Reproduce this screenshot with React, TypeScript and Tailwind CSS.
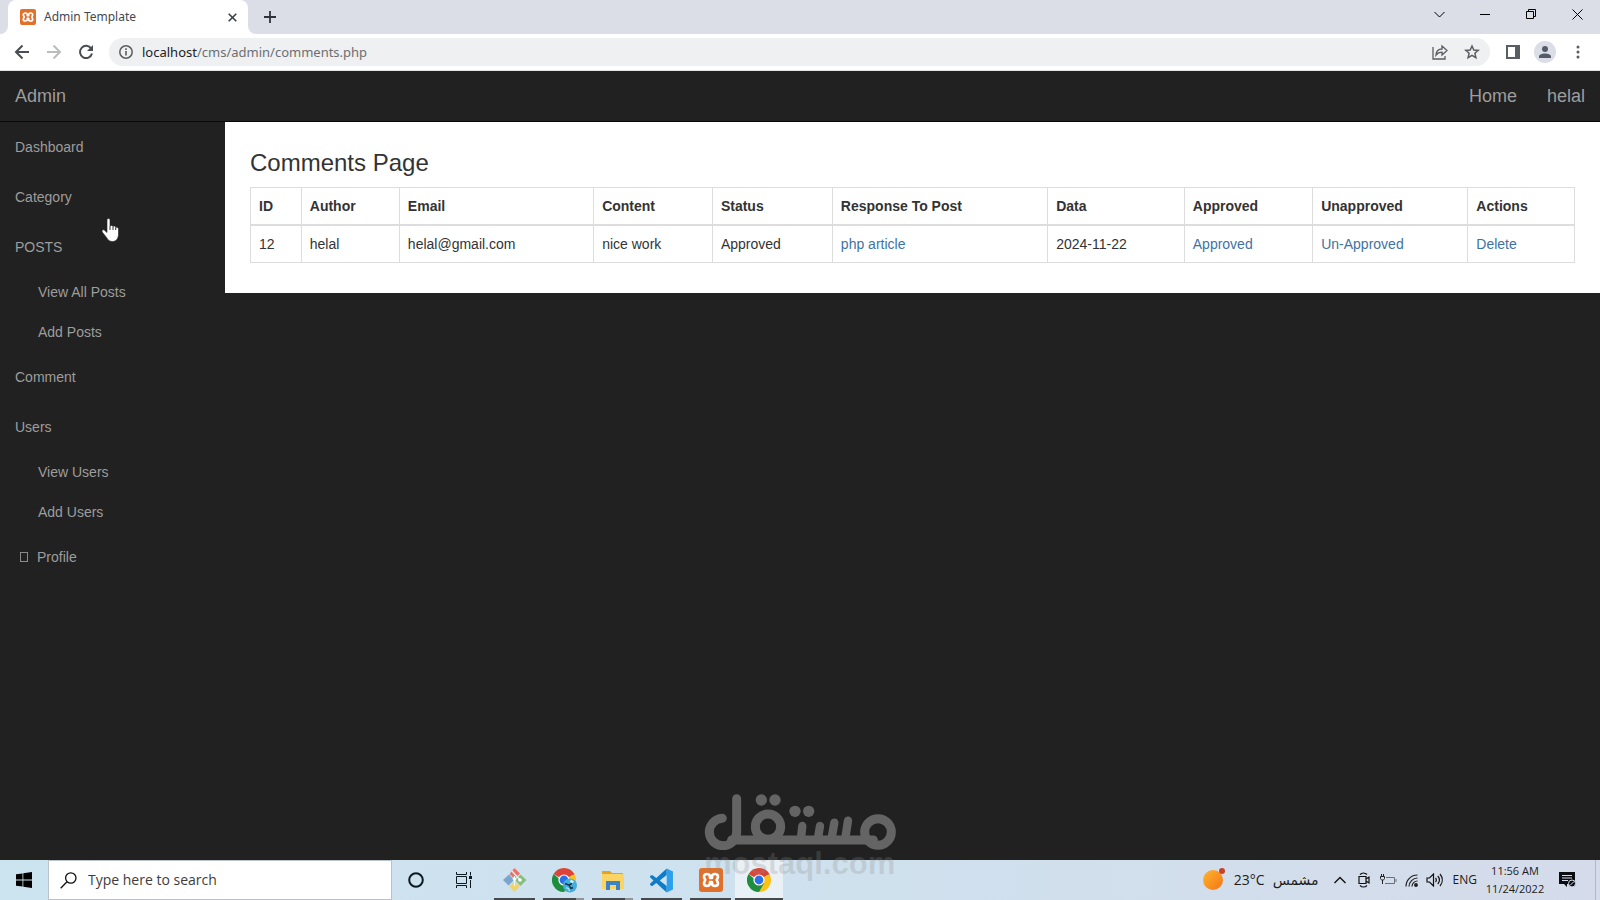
import { useState } from "react";

const subItem = "flex h-10 items-center pl-[38px] hover:text-white";
const navItem = "flex h-[50px] items-center px-[15px] hover:text-white";

const menu = [
  { label: "Dashboard" },
  { label: "Category" },
  { label: "POSTS", children: ["View All Posts", "Add Posts"] },
  { label: "Comment" },
  { label: "Users", children: ["View Users", "Add Users"] },
];

const columns = ["ID", "Author", "Email", "Content", "Status", "Response To Post", "Data", "Approved", "Unapproved", "Actions"];

const comments = [
  { id: 12, author: "helal", email: "helal@gmail.com", content: "nice work", status: "Approved", post: "php article", date: "2024-11-22" },
];

function XamppIcon({ size }: { size: number }) {
  return (
    <svg width={size} height={size} viewBox="0 0 24 24" aria-hidden="true">
      <rect width="24" height="24" rx="3" fill="#e0702a" />
      <path
        d="M8 6c-2 0-3 1.200-3 2.700S6 11 6.300 12C6 13 5 13.800 5 15.300S6 18 8 18s3-1.200 3-2.700V14h2v1.300c0 1.500 1 2.700 3 2.700s3-1.200 3-2.700-1-2.300-1.300-3.300c.3-1 1.300-1.800 1.300-3.300S18 6 16 6s-3 1.200-3 2.700V10h-2V8.700C11 7.200 10 6 8 6z"
        fill="none"
        stroke="#fff"
        strokeWidth="2.600"
        strokeLinejoin="round"
      />
    </svg>
  );
}

function ChromeIcon({ badge }: { badge?: boolean }) {
  return (
    <svg className="-mr-1" width="28" height="26" viewBox="0 0 28 26" aria-hidden="true">
      <path d="M12 13 1.600 7A12 12 0 0 1 22.400 7z" fill="#db4437" />
      <path d="M12 13 22.400 7A12 12 0 0 1 12 25l-1-4z" fill="#fbc116" />
      <path d="M1.600 7A12 12 0 0 0 12 25l5.200-9H12z" fill="#1e8e3e" />
      <path d="M12 7.500h10.600L22.400 7 12 6z" fill="#db4437" />
      <circle cx="12" cy="13" r="5.600" fill="#fff" />
      <circle cx="12" cy="13" r="4.400" fill="#2a70e8" />
      {badge && (
        <g>
          <circle cx="18" cy="18.500" r="7" fill="#45aede" />
          <path d="M19 12.500l3 2-2 2-2-2z" fill="#d9f2fb" />
          <path d="M13 16.500l4 1.500 2 3.500 2-1M17 18l3-1.500" fill="none" stroke="#17384c" strokeWidth="1.500" />
          <path d="M14 21c1.500-.5 3 .5 3.500 3" fill="none" stroke="#bfe6f5" strokeWidth="1.200" />
        </g>
      )}
    </svg>
  );
}

function GitIcon() {
  return (
    <svg width="26" height="26" viewBox="0 0 26 26" aria-hidden="true">
      <path d="M12.500 1 18 6.500 12.500 12 7.500 7z" fill="#e8736b" />
      <path d="M18.500 7.500 24.500 13l-6 6-5.500-6z" fill="#85bf79" />
      <path d="M7 7.500 12 13l-5.500 5.500L1 13z" fill="#7ba4cf" />
      <path d="M12.500 14 18 19.500 12.500 25 7 19.500z" fill="#eed46c" />
      <path d="M10 4l8 9M12.500 9v10" stroke="#eef4f5" strokeWidth="1.200" />
      <circle cx="18" cy="13" r="1.800" fill="#fff" />
      <circle cx="12.500" cy="12" r="1.800" fill="#fff" />
    </svg>
  );
}

function FolderIcon() {
  return (
    <svg width="24" height="22" viewBox="0 0 24 22" aria-hidden="true">
      <path d="M1 2h8l2 2h11v5H1z" fill="#e2a322" />
      <path d="M1 5h22v15H1z" fill="#fbd466" />
      <path d="M5 12h14v9h-4v-5H9v5H5z" fill="#3c83c4" />
    </svg>
  );
}

function CodeIcon() {
  return (
    <svg width="25" height="25" viewBox="0 0 24 24" aria-hidden="true">
      <path d="M17 .5 7 9.700 3 6.600 1 7.600v1.200L4.300 12 1 15.200v1.200l2 1 4-3.100L17 23.500z M17 6.800v10.400L10.300 12z" fill="#0f7cc9" fillRule="evenodd" />
      <path d="M17 .5 23 3.300v17.400l-6 2.800z" fill="#2ca0ec" />
    </svg>
  );
}

const apps = [
  { name: "Git Bash", icon: <GitIcon />, stacked: false, active: false },
  { name: "Chrome", icon: <ChromeIcon badge />, stacked: true, active: false },
  { name: "File Explorer", icon: <FolderIcon />, stacked: true, active: false },
  { name: "Visual Studio Code", icon: <CodeIcon />, stacked: false, active: false },
  { name: "XAMPP", icon: <XamppIcon size={24} />, stacked: false, active: false },
  { name: "Google Chrome", icon: <ChromeIcon />, stacked: false, active: true },
];

function TabStrip() {
  return (
    <div className="flex h-[34px] items-stretch bg-[#dbdee7] pl-2">
      <div className="relative flex w-60 items-center rounded-t-lg bg-white pl-3 pr-2.5">
        <XamppIcon size={16} />
        <span className="ml-2 flex-1 font-['Noto_Sans','Open_Sans',sans-serif] text-xs text-[#45494d]">Admin Template</span>
        <button aria-label="Close tab" className="flex size-3 items-center justify-center">
          <svg width="9" height="9" viewBox="0 0 9 9" stroke="#3c4043" strokeWidth="1.600"><path d="M.7.7l7.600 7.600M8.300.7L.7 8.300" /></svg>
        </button>
        <svg className="absolute -left-2 bottom-0" width="8" height="8" viewBox="0 0 8 8"><path d="M8 0v8H0a8 8 0 0 0 8-8z" fill="#fff" /></svg>
        <svg className="absolute -right-2 bottom-0" width="8" height="8" viewBox="0 0 8 8"><path d="M0 0v8h8a8 8 0 0 1-8-8z" fill="#fff" /></svg>
      </div>
      <button aria-label="New tab" className="ml-4 flex items-center">
        <svg width="12" height="12" viewBox="0 0 12 12" stroke="#30343a" strokeWidth="1.800"><path d="M6 0v12M0 6h12" /></svg>
      </button>
      <div className="ml-auto flex h-7 text-black">
        <button aria-label="Search tabs" className="flex w-[46px] items-center justify-center">
          <svg width="11" height="7" viewBox="0 0 11 7" fill="none" stroke="currentColor"><path d="M.5 1l5 5 5-5" /></svg>
        </button>
        <button aria-label="Minimize" className="flex w-[46px] items-center justify-center">
          <svg width="10" height="10" viewBox="0 0 10 10" stroke="currentColor"><path d="M0 5.500h10" /></svg>
        </button>
        <button aria-label="Restore" className="flex w-[46px] items-center justify-center">
          <svg width="10" height="10" viewBox="0 0 10 10" fill="none" stroke="currentColor"><path d="M.5 2.500h7v7h-7zM2.500 2.500v-2h7v7h-2" /></svg>
        </button>
        <button aria-label="Close" className="flex w-[46px] items-center justify-center">
          <svg width="11" height="11" viewBox="0 0 11 11" stroke="currentColor"><path d="M.5.5l10 10M10.500.5l-10 10" /></svg>
        </button>
      </div>
    </div>
  );
}

function Toolbar() {
  return (
    <div className="flex h-[37px] items-center border-b border-[#dfe1e3] bg-white pl-[14px] pr-5 text-[#5a5d61]">
      <button aria-label="Back">
        <svg width="16" height="16" viewBox="0 0 16 16" fill="none" stroke="#4a4d51" strokeWidth="2"><path d="M15 8H2M8.500 1.500L2 8l6.500 6.500" /></svg>
      </button>
      <button aria-label="Forward" className="ml-4">
        <svg width="16" height="16" viewBox="0 0 16 16" fill="none" stroke="#babcbe" strokeWidth="2"><path d="M1 8h13M7.500 1.500L14 8l-6.500 6.500" /></svg>
      </button>
      <button aria-label="Reload" className="ml-4">
        <svg width="16" height="16" viewBox="0 0 16 16"><path d="M13.200 4.600A6.100 6.100 0 1 0 14 9.500" fill="none" stroke="#4a4d51" strokeWidth="2" /><path d="M15 1v6H9z" fill="#4a4d51" /></svg>
      </button>
      <div className="ml-[15px] flex h-7 flex-1 items-center rounded-full bg-[#eff0f2] px-2.5">
        <svg width="14" height="14" viewBox="0 0 14 14"><circle cx="7" cy="7" r="6.200" fill="none" stroke="currentColor" strokeWidth="1.500" /><path d="M7 6v4.500M7 3.300v1.600" stroke="currentColor" strokeWidth="1.600" /></svg>
        <div className="ml-[9px] flex-1 font-['Noto_Sans','Open_Sans',sans-serif] text-[13px] text-[#6b6f73]">
          <span className="text-[#202124]">localhost</span>/cms/admin/comments.php
        </div>
        <button aria-label="Share">
          <svg width="16" height="16" viewBox="0 0 16 16" fill="none" stroke="currentColor" strokeWidth="1.300"><path d="M1 3v12h12v-3" /><path d="M4 11c.3-4 2.500-6 6-6V2l5 4.500-5 4.500V8.200C7.500 8.200 5.500 9 4 11z" /></svg>
        </button>
        <button aria-label="Bookmark this tab" className="ml-4">
          <svg width="16" height="16" viewBox="0 0 16 16" fill="none" stroke="currentColor" strokeWidth="1.500"><path d="M8 2l1.800 4 4.400.4-3.300 2.900 1 4.300L8 11.300l-3.900 2.300 1-4.300L1.800 6.400 6.200 6z" /></svg>
        </button>
      </div>
      <button aria-label="Side panel" className="ml-4">
        <svg width="14" height="14" viewBox="0 0 14 14"><path d="M1 1h12v12H1z" fill="#fff" stroke="currentColor" strokeWidth="2" /><path d="M9 0h5v14H9z" fill="currentColor" /></svg>
      </button>
      <button aria-label="Profile" className="ml-3.5 flex size-[22px] items-center justify-center rounded-full bg-[#dbdee7]">
        <svg width="12" height="12" viewBox="0 0 12 12" fill="#545c6c"><circle cx="6" cy="3" r="3" /><path d="M0 12v-1.500C0 8.500 3 7.500 6 7.500s6 1 6 3V12z" /></svg>
      </button>
      <button aria-label="Menu" className="ml-5">
        <svg width="4" height="14" viewBox="0 0 4 14" fill="currentColor"><circle cx="2" cy="2" r="1.500" /><circle cx="2" cy="7" r="1.500" /><circle cx="2" cy="12" r="1.500" /></svg>
      </button>
    </div>
  );
}

function Sidebar() {
  return (
    <nav className="w-[225px] shrink-0">
      <ul>
        {menu.map((item) => (
          <li key={item.label}>
            <a href="#" className={navItem}>{item.label}</a>
            {item.children && (
              <ul>
                {item.children.map((child) => (
                  <li key={child}><a href="#" className={subItem}>{child}</a></li>
                ))}
              </ul>
            )}
          </li>
        ))}
        <li>
          <a href="#" className={navItem}>
            <span className="ml-[5px] mr-[9px] h-2.5 w-2 border border-[#8a8a8a]" />
            Profile
          </a>
        </li>
      </ul>
    </nav>
  );
}

function CommentsTable() {
  const cell = "border border-[#ddd] p-2";
  return (
    <table className="w-full border-collapse border border-[#ddd] text-left">
      <thead>
        <tr>
          {columns.map((c) => (
            <th key={c} className="border border-b-2 border-[#ddd] p-2 font-bold">{c}</th>
          ))}
        </tr>
      </thead>
      <tbody>
        {comments.map((row) => (
          <tr key={row.id}>
            <td className={cell}>{row.id}</td>
            <td className={cell}>{row.author}</td>
            <td className={cell}>{row.email}</td>
            <td className={cell}>{row.content}</td>
            <td className={cell}>{row.status}</td>
            <td className={cell}><a href="#" className="text-[#3e73a3]">{row.post}</a></td>
            <td className={cell}>{row.date}</td>
            <td className={cell}><a href="#" className="text-[#3e73a3]">Approved</a></td>
            <td className={cell}><a href="#" className="text-[#3e73a3]">Un-Approved</a></td>
            <td className={cell}><a href="#" className="text-[#3e73a3]">Delete</a></td>
          </tr>
        ))}
      </tbody>
    </table>
  );
}

function Taskbar() {
  const [query, setQuery] = useState("");

  return (
    <div className="flex h-10 items-stretch bg-linear-to-r from-[#cbe4ef] via-[#cfe1ee] to-[#d5dbea] font-['Open_Sans','Noto_Sans',sans-serif] text-[#1b1d20]">
      <button aria-label="Start" className="flex w-12 items-center justify-center">
        <svg width="16" height="16" viewBox="0 0 16 16"><path d="M0 2.300l6.500-.9v6.200H0zM7.300 1.300L16 0v7.600H7.300zM0 8.400h6.500v6.200L0 13.700zM7.300 8.400H16V16l-8.700-1.300z" /></svg>
      </button>
      <label className="flex w-[344px] items-center border border-[#b9c3c9] bg-white pl-[11px]">
        <svg width="17" height="17" viewBox="0 0 17 17" fill="none" stroke="#111" strokeWidth="1.300"><circle cx="10.800" cy="6" r="5.200" /><path d="M7 9.800L.7 16.300" /></svg>
        <input
          aria-label="Search"
          value={query}
          onChange={(e) => setQuery(e.target.value)}
          placeholder="Type here to search"
          className="ml-[11px] flex-1 text-sm outline-none placeholder:text-[#3d3d3d]"
        />
      </label>
      <button aria-label="Cortana" className="flex w-12 items-center justify-center">
        <svg width="16" height="16" viewBox="0 0 16 16" fill="none" stroke="#0d1a22" strokeWidth="2"><circle cx="8" cy="8" r="6.800" /></svg>
      </button>
      <button aria-label="Task view" className="mr-0.5 flex w-12 items-center justify-center">
        <svg width="17" height="16" viewBox="0 0 17 16" fill="none" stroke="#0d1a22"><path d="M.5 0v2.500h10V0M.5 16v-2.500h10V16M.5 4.500h10v7H.5zM14.500 0v3.500M14.500 8v8" /><path d="M13 4h3v3h-3z" fill="#0d1a22" stroke="none" /></svg>
      </button>
      <div className="flex">
        {apps.map((app) => (
          <button key={app.name} aria-label={app.name} className={app.active ? "flex w-12 flex-col bg-[#eaf1f6]" : "flex w-[49px] flex-col px-1"}>
            <span className="flex w-full flex-1 items-center justify-center pt-0.5">{app.icon}</span>
            <span className="flex h-0.5 w-full bg-[#45494c]">
              {app.stacked && <span className="ml-auto w-2 bg-[#8f9598]" />}
            </span>
          </button>
        ))}
      </div>
      <div className="ml-auto flex items-center">
        <svg width="24" height="24" viewBox="0 0 24 24">
          <defs>
            <linearGradient id="sun" x1="0" y1="0" x2="1" y2="1"><stop stopColor="#ffb52e" /><stop offset="1" stopColor="#f47414" /></linearGradient>
          </defs>
          <circle cx="11" cy="12" r="10" fill="url(#sun)" />
          <circle cx="20" cy="3" r="3" fill="#c5422b" />
        </svg>
        <span className="ml-2 text-sm">23°C</span>
        <span dir="rtl" className="ml-2 font-['DejaVu_Sans',sans-serif] text-sm">مشمس</span>
        <button aria-label="Show hidden icons" className="ml-[15px]">
          <svg width="12" height="8" viewBox="0 0 12 8" fill="none" stroke="#111" strokeWidth="1.400"><path d="M.5 7L6 1.500 11.500 7" /></svg>
        </button>
        <svg className="ml-3" width="12" height="16" viewBox="0 0 12 16" fill="none" stroke="#111" strokeWidth="1.200"><path d="M1 4.500h7v7H1zM8 7l3-2v6L8 9M2 2.500C4 .5 7 .5 9 2.500M2 13.500c2 2 5 2 7 0" /></svg>
        <svg className="ml-2.5" width="17" height="14" viewBox="0 0 17 14" fill="none" stroke="#222"><path d="M1.500 1v2M3.500 1v2M.5 3.500h4v2c0 1-1 1.500-2 1.500s-2-.5-2-1.500zM2.500 7v4" /><path d="M6 4.500h8.500v6H5M16 6v3" stroke="#6c7078" /></svg>
        <svg className="ml-2" width="13" height="13" viewBox="0 0 13 13" fill="none" stroke="#222" strokeWidth="1.200"><path d="M1 12.500C1 6 6 1 12.500 1M4 12.500C4 8 8 4 12.500 4M7 12.500C7 9.500 9.500 7 12.500 7" /><circle cx="11" cy="11" r="1.300" fill="#222" /></svg>
        <svg className="ml-2" width="17" height="14" viewBox="0 0 17 14" fill="none" stroke="#111" strokeWidth="1.200"><path d="M1 5h2.500l4-4v12l-4-4H1zM9.500 5c1 1.200 1 2.800 0 4M11.800 3c2 2.400 2 5.600 0 8M14 1c3 3.600 3 8.400 0 12" /></svg>
        <span className="ml-2.5 text-xs">ENG</span>
        <div className="ml-2 flex w-[60px] flex-col items-center whitespace-nowrap text-[11px] leading-[18px]">
          <span>11:56 AM</span>
          <span>11/24/2022</span>
        </div>
        <button aria-label="Notifications" className="ml-3.5">
          <svg width="17" height="16" viewBox="0 0 17 16"><path d="M0 0h16v12H8v3l-3-3H0z" fill="#0b0d12" /><path d="M3 3.500h10M3 6h10M3 8.500h6" stroke="#d5dbea" /><circle cx="13" cy="11.500" r="3.500" fill="#0b0d12" stroke="#d5dbea" /><path d="M11 13.500l4-4" stroke="#d5dbea" /></svg>
        </button>
        <span className="ml-[19px] mr-1 h-10 w-px bg-[#b2b8c5]" />
      </div>
    </div>
  );
}

function Watermark() {
  return (
    <div className="pointer-events-none absolute bottom-[50px] left-1/2 -translate-x-1/2">
      <svg width="192" height="56" viewBox="132 72 576 168" fill="none" stroke="#fff" strokeWidth="27" strokeLinecap="round" opacity="0.300" aria-hidden="true">
        <circle cx="654" cy="186" r="40" />
        <circle cx="324" cy="170" r="38" />
        <path d="M187 145a41 41 0 1 0 43 41V86" />
        <path d="M215 210H640" />
        <path d="M427 168l-4 36M480 168l-6 36M523 158l-8 46M564 152l-8 52" strokeWidth="25" />
        <g fill="#fff" stroke="none">
          <circle cx="304" cy="90" r="17" />
          <circle cx="345" cy="90" r="17" />
          <circle cx="405" cy="124" r="17" />
          <circle cx="446" cy="124" r="17" />
        </g>
      </svg>
      <div className="absolute left-0 top-full -mt-1 font-['Liberation_Sans',Arial,sans-serif] text-[31px] font-bold leading-9 text-[#8c8c8c]/25">mostaql.com</div>
    </div>
  );
}

export default function App() {
  return (
    <div className="relative flex min-h-screen flex-col overflow-hidden bg-[#212121] font-['Liberation_Sans',Arial,sans-serif] text-sm text-[#9d9d9d]">
      <TabStrip />
      <Toolbar />

      <header className="flex h-[51px] items-center justify-between border-b border-[#080808] px-[15px] text-lg">
        <a href="#">Admin</a>
        <nav className="flex gap-[30px]">
          <a href="#">Home</a>
          <a href="#">helal</a>
        </nav>
      </header>

      <div className="flex flex-1 items-start">
        <Sidebar />
        <main className="flex-1 bg-white px-[25px] pb-[30px] pt-7 text-[#333]">
          <h3 className="mb-3 text-2xl leading-[25px]">Comments Page</h3>
          <CommentsTable />
        </main>
      </div>

      <Taskbar />
      <Watermark />

      {/* mouse pointer */}
      <svg className="pointer-events-none absolute left-[101px] top-[218px]" width="19" height="24" viewBox="0 0 19 24" aria-hidden="true">
        <path d="M6 2c0-2 3-2 3 0v6c1-1 2.500-.7 3 .5 1-.8 2.500-.3 2.700 1 1.300-.6 2.800.2 2.800 1.700V16c0 4-2 7.500-6 7.500-3 0-4.500-1.500-6-4L1.200 14c-1-1.800 1-3 2.300-1.800L6 14.500z" fill="#fff" stroke="#222" strokeWidth=".6" />
        <path d="M9 8v4M12 8.500V12M14.700 9.500V12" stroke="#333" />
      </svg>
    </div>
  );
}
